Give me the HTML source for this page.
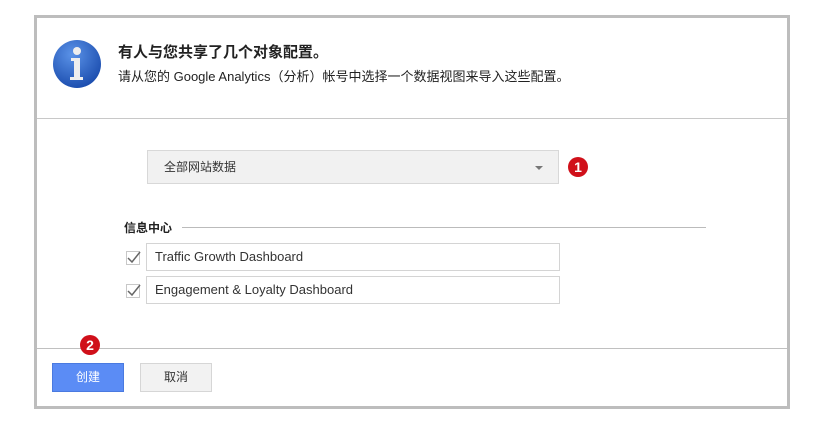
<!DOCTYPE html><html><head><meta charset="utf-8"><style>
body{margin:0;width:836px;height:442px;background:#fff;font-family:"Liberation Sans","Noto Sans CJK SC",sans-serif;position:relative;overflow:hidden}
.a{position:absolute}
.frame{left:34px;top:15px;width:750px;height:388px;border:3px solid #bdbdbd}
.t{color:#222;white-space:nowrap}
.badge{width:20px;height:20px;border-radius:50%;background:#d0101a;color:#fff;font-weight:bold;font-size:14px;text-align:center;line-height:20px}
.inp{border:1px solid #d4d4d4;background:#fff;font-size:13px;color:#333;line-height:26px;padding-left:8px;box-sizing:border-box}
.cb{width:14px;height:14px;border:1px solid #c8c8c8;box-sizing:border-box}
</style></head><body>
<div class="a frame"></div>
<svg class="a" style="left:52px;top:39px" width="50" height="50"><defs><radialGradient id="g" cx="40%" cy="30%" r="70%"><stop offset="0" stop-color="#5b93e8"/><stop offset="1" stop-color="#1d4fb0"/></radialGradient></defs><circle cx="25" cy="25" r="24" fill="url(#g)"/><circle cx="25" cy="12" r="4" fill="#eee"/><path d="M19 19h9v19h3v3H18v-3h4V22h-3z" fill="#eee"/></svg>
<div class="a t" style="left:118px;top:41px;font-size:15px;font-weight:bold">有人与您共享了几个对象配置。</div>
<div class="a t" style="left:118px;top:66px;font-size:13px">请从您的 Google Analytics（分析）帐号中选择一个数据视图来导入这些配置。</div>
<div class="a" style="left:37px;top:118px;width:750px;height:1px;background:#c8c8c8"></div>
<div class="a" style="left:147px;top:150px;width:412px;height:34px;background:#f1f1f1;border:1px solid #d8d8d8;box-sizing:border-box"></div>
<div class="a t" style="left:164px;top:158px;font-size:12px;color:#333">全部网站数据</div>
<div class="a" style="left:535px;top:166px;border:4px solid transparent;border-top:4px solid #777;border-bottom:0"></div>
<div class="a badge" style="left:568px;top:157px">1</div>
<div class="a t" style="left:124px;top:219px;font-size:12px;font-weight:bold">信息中心</div>
<div class="a" style="left:182px;top:227px;width:524px;height:1px;background:#bbb"></div>
<div class="a cb" style="left:126px;top:251px"></div>
<svg class="a" style="left:126px;top:249px" width="16" height="16"><path d="M2 9l4 4 8-10" fill="none" stroke="#666" stroke-width="1.5"/></svg>
<div class="a inp" style="left:146px;top:243px;width:414px;height:28px">Traffic Growth Dashboard</div>
<div class="a cb" style="left:126px;top:284px"></div>
<svg class="a" style="left:126px;top:282px" width="16" height="16"><path d="M2 9l4 4 8-10" fill="none" stroke="#666" stroke-width="1.5"/></svg>
<div class="a inp" style="left:146px;top:276px;width:414px;height:28px">Engagement &amp; Loyalty Dashboard</div>
<div class="a" style="left:37px;top:348px;width:750px;height:1px;background:#c0c0c0"></div>
<div class="a badge" style="left:80px;top:335px">2</div>
<div class="a" style="left:52px;top:363px;width:72px;height:29px;background:#5b8cf5;border:1px solid #4a7ae0;box-sizing:border-box;color:#fff;font-size:12px;text-align:center;line-height:27px">创建</div>
<div class="a" style="left:140px;top:363px;width:72px;height:29px;background:#f2f2f2;border:1px solid #d6d6d6;box-sizing:border-box;color:#333;font-size:12px;text-align:center;line-height:27px">取消</div>
</body></html>
